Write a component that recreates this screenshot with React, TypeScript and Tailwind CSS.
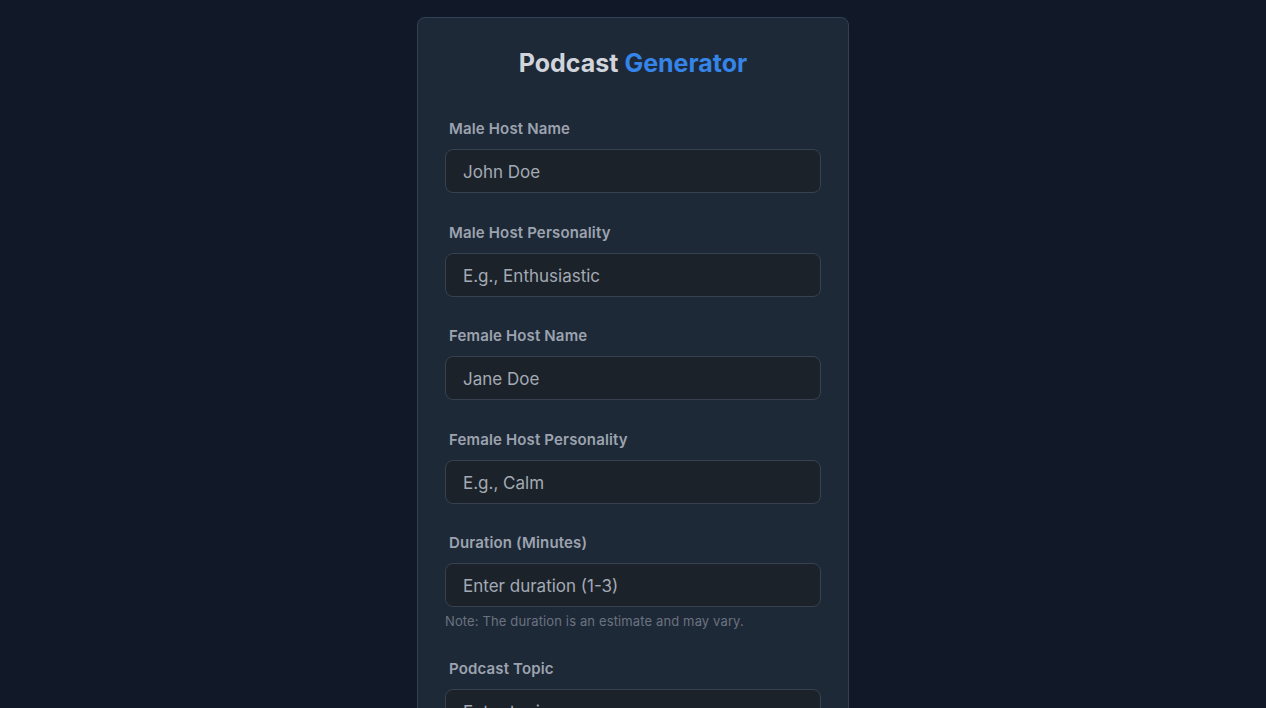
import React from "react";

const fields = [
  { label: "Male Host Name", value: "John Doe" },
  { label: "Male Host Personality", value: "E.g., Enthusiastic" },
  { label: "Female Host Name", value: "Jane Doe" },
  { label: "Female Host Personality", value: "E.g., Calm" },
];

function Field({ label, value, note }: { label: string; value: string; note?: string }) {
  return (
    <div className="flex flex-col">
      <label className="ml-1 mb-[10px] text-[15px] font-semibold leading-5 tracking-[0.01em] text-[#9ca3af]">{label}</label>
      <div className="h-[44px] rounded-lg border border-[#374151] bg-[#1c2229] px-[17px] text-[17px] leading-[44px] text-[#a3aab5]">
        {value}
      </div>
      {note && <p className="mt-[6px] text-[13px] leading-4 tracking-[0.01em] text-[#6b7280]">{note}</p>}
    </div>
  );
}

export default function App() {
  return (
    <div className="min-h-screen bg-[#111827] pt-[17px] pb-8" style={{ fontFamily: "Inter, 'Noto Sans', sans-serif" }}>
      <div className="mx-auto w-[432px] rounded-lg border border-[#334155] bg-[#1e2937] px-[27px] pt-[29px] pb-8">
        <h1 className="text-center text-[25px] font-bold leading-8 text-[#d1d5db]">
          Podcast <span className="text-[#3584e8]">Generator</span>
        </h1>
        <div className="mt-[40px] flex flex-col gap-[29.5px]">
          {fields.map((f) => (
            <Field key={f.label} label={f.label} value={f.value} />
          ))}
          <Field label="Duration (Minutes)" value="Enter duration (1-3)" note="Note: The duration is an estimate and may vary." />
          <Field label="Podcast Topic" value="Enter topic" />
          <button className="h-[44px] rounded-lg bg-[#2563eb] text-base font-semibold text-white">Generate Podcast</button>
        </div>
      </div>
    </div>
  );
}
